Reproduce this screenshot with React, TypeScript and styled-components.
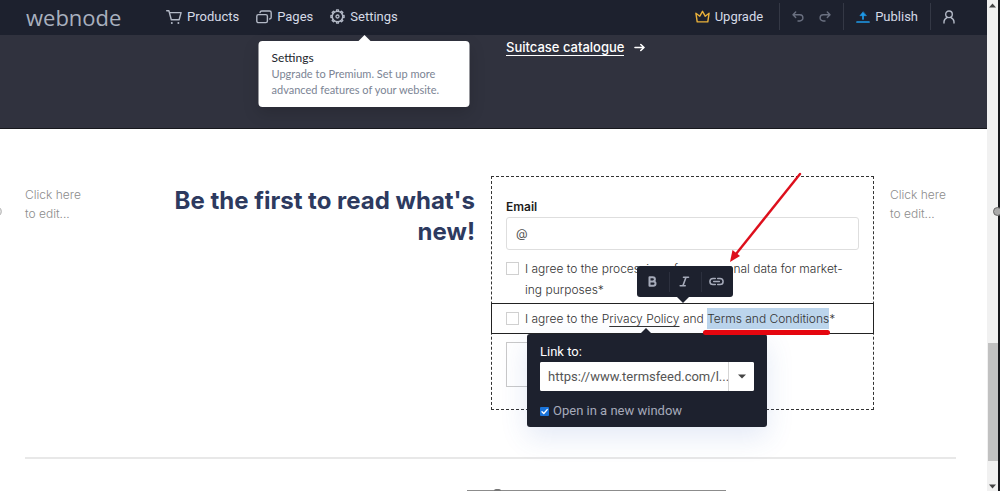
import React from "react";
import styled, { createGlobalStyle } from "styled-components";

const ui = '"Roboto", "Liberation Sans", sans-serif';
const copy = '"Inter", "Liberation Sans", sans-serif';
const navy = "#1d212e";

const GlobalStyle = createGlobalStyle`
  *, *::before, *::after { box-sizing: border-box; }
  html, body { margin: 0; padding: 0; }
  body { background: #fff; font-family: ${copy}; overflow: hidden; }
  button, input { font: inherit; }
  p, h2 { margin: 0; }
`;

const Shell = styled.div`
  display: flex;
  height: 100vh;
  overflow: hidden;
`;

const Page = styled.div`
  flex: 1;
  min-width: 0;
  display: flex;
  flex-direction: column;
  position: relative;
`;

const Header = styled.header`
  display: flex;
  align-items: center;
  height: 35px;
  flex: none;
  padding: 0 20px 2px 26px;
  background: ${navy};
  color: #d5dae6;
  font-family: ${ui};
  font-size: 13px;
`;

const Logo = styled.a`
  width: 140px;
  color: #a9b0be;
  font: 400 22px/28px "Open Sans", sans-serif;
  text-decoration: none;
`;

const Nav = styled.nav`
  display: flex;
  flex: 1;
  gap: 17px;
`;

const NavItem = styled.div`
  position: relative;
`;

const BarButton = styled.button`
  display: flex;
  align-items: center;
  gap: 5px;
  height: 32px;
  padding: 0;
  border: 0;
  background: none;
  color: inherit;
  cursor: pointer;
`;

const Actions = styled.div`
  display: flex;
  align-items: center;
`;

const ActionGroup = styled.div<{ $first?: boolean }>`
  display: flex;
  align-items: center;
  gap: 15px;
  height: 27px;
  padding: 0 ${(p) => (p.$first ? "16px" : "12px")} 0 12px;
  border-left: ${(p) => (p.$first ? "0" : "1px solid #343845")};
`;

const Tip = styled.div`
  position: absolute;
  z-index: 5;
  top: 40px;
  left: 50%;
  width: 211px;
  transform: translateX(-50%);
  padding: 9px 13px;
  border-radius: 4px;
  background: #fff;
  box-shadow: 0 6px 16px rgba(0, 0, 0, 0.15);
  color: #7b8494;
  font: 400 11px/16px "Lato", sans-serif;
  white-space: nowrap;
  &::before {
    content: "";
    position: absolute;
    left: 50%;
    top: -6px;
    margin-left: -7px;
    border: 7px solid transparent;
    border-top: 0;
    border-bottom-color: #fff;
  }
`;

const TipTitle = styled.p`
  color: #22252d;
  font: 400 12px/16px "Lato", sans-serif;
`;

const Columns = styled.div`
  display: grid;
  grid-template-columns: 66px 368fr 383fr 66px;
  gap: 16px;
  padding: 0 31px 0 25px;
`;

const Hero = styled.section`
  flex: none;
  height: 94px;
  background: #30323e;
  border-bottom: 1px solid #17181d;
`;

const HeroLink = styled.a`
  grid-column: 3;
  display: flex;
  align-items: center;
  gap: 10px;
  height: 25px;
  padding-left: 15px;
  color: #fff;
  font-size: 13px;
  font-weight: 500;
  text-decoration: none;
  span { border-bottom: 1px solid #fff; line-height: 15px; }
`;

const Newsletter = styled.section`
  padding-top: 47px;
`;

const SideNote = styled.p`
  padding-top: 9px;
  color: #8c8c8c;
  font: 300 12px/19px ${copy};
`;

const Title = styled.h2`
  padding-top: 9px;
  color: #2d3a5f;
  font: 700 24px/31px ${copy};
  text-align: right;
`;

const Form = styled.form`
  height: 234px;
  padding: 19px 0 0;
  border: 1px dashed #333;
`;

const Field = styled.div`
  display: flex;
  flex-direction: column;
  padding: 0 14px;
  label {
    color: #1c1c1c;
    font: 600 12px/21px ${copy};
  }
`;

const EmailInput = styled.input`
  width: 100%;
  height: 33px;
  padding: 0 9px;
  border: 1px solid #dedede;
  border-radius: 3px;
  font-size: 12px;
  &::placeholder { color: #555; opacity: 1; }
`;

const Consent = styled.div<{ $active?: boolean }>`
  position: relative;
  display: flex;
  gap: 6px;
  margin: ${(p) => (p.$active ? "3px -1px 0" : "8px 0 0")};
  padding: ${(p) => (p.$active ? "4px 14px" : "0 14px")};
  border: ${(p) => (p.$active ? "1px solid #222" : "0")};
  color: #333;
  font: 300 12px/21px ${copy};
  white-space: nowrap;
`;

const Tick = styled.input`
  appearance: none;
  flex: none;
  width: 13px;
  height: 13px;
  margin: 4px 0 0;
  border: 1px solid #d0d0d0;
  background: #fff;
`;

const PolicyLink = styled.a`
  color: inherit;
  text-decoration: underline;
  text-underline-offset: 3px;
`;

const Selected = styled.span`
  position: relative;
  display: inline-block;
  background: #bcd5ec;
  &::after {
    content: "";
    position: absolute;
    z-index: 4;
    left: -4px;
    right: -1px;
    bottom: -6px;
    height: 5px;
    border-radius: 3px;
    background: #e5060f;
  }
`;

const Submit = styled.button`
  width: 100px;
  height: 45px;
  margin: 8px 14px 0;
  border: 1px solid #c9c9c9;
  background: #fff;
`;

const FormatBar = styled.div`
  position: absolute;
  z-index: 3;
  left: 145px;
  bottom: 36px;
  display: flex;
  align-items: center;
  height: 31px;
  border-radius: 3px;
  background: ${navy};
  &::after {
    content: "";
    position: absolute;
    left: 50%;
    top: 100%;
    margin-left: -8px;
    border: 6px solid transparent;
    border-bottom: 0;
    border-top-color: ${navy};
  }
`;

const FormatButton = styled.button`
  display: grid;
  place-items: center;
  width: 32px;
  height: 20px;
  padding: 0 2px 0 0;
  border: 0;
  background: none;
  color: #a6abba;
  & + & { border-left: 1px solid #2c303e; }
`;

const LinkPanel = styled.div`
  position: absolute;
  z-index: 3;
  left: 35px;
  top: 30px;
  width: 240px;
  height: 93px;
  padding: 8px 13px;
  border-radius: 3px;
  background: ${navy};
  box-shadow: 0 10px 28px rgba(60, 100, 190, 0.14);
  color: #fff;
  font: 400 13px/20px ${ui};
  &::before {
    content: "";
    position: absolute;
    left: 50%;
    top: -6px;
    margin-left: -7px;
    border: 6px solid transparent;
    border-top: 0;
    border-bottom-color: ${navy};
  }
`;

const PanelLabel = styled.label`
  display: block;
`;

const Combo = styled.div`
  display: flex;
  height: 29px;
  border-radius: 2px;
  background: #fff;
  overflow: hidden;
  input {
    flex: 1;
    min-width: 0;
    padding: 0 0 0 8px;
    border: 0;
    color: #555;
    font-size: 13px;
  }
  button {
    display: grid;
    place-items: center;
    width: 26px;
    padding: 0;
    border: 0;
    border-left: 1px solid #d5d5d5;
    background: #fff;
  }
`;

const NewWindow = styled.label`
  display: flex;
  align-items: center;
  gap: 4px;
  margin-top: 10px;
  color: #a6aaba;
  input {
    appearance: none;
    width: 9px;
    height: 9px;
    margin: 0;
    border-radius: 1px;
    background: #1a73d9;
  }
`;

const TickBox = styled.span`
  position: relative;
  display: flex;
  svg { position: absolute; inset: 0; }
`;

const Rule = styled.hr`
  margin: 47px 31px 0 25px;
  border: 0;
  border-top: 2px solid #e8e8e8;
`;

const BlockEdge = styled.div`
  position: absolute;
  left: 467px;
  bottom: 0;
  width: 259px;
  height: 1px;
  background: #8c8c8c;
  &::before {
    content: "";
    position: absolute;
    left: 27px;
    top: -1px;
    width: 7px;
    height: 2px;
    border-radius: 2px 2px 0 0;
    background: #777;
  }
`;

const Handle = styled.i<{ $right?: boolean }>`
  position: absolute;
  z-index: 6;
  top: 207px;
  ${(p) => (p.$right ? "right: -15px" : "left: -7px")};
  width: 9px;
  height: 9px;
  border: 1px solid ${(p) => (p.$right ? "#666" : "#bbb")};
  border-radius: 50%;
  background: ${(p) => (p.$right ? "#aaa" : "#ddd")};
`;

const Pointer = styled.svg`
  position: absolute;
  z-index: 7;
  top: -134px;
  left: 234px;
  pointer-events: none;
`;

const ScrollBar = styled.div`
  display: flex;
  flex-direction: column;
  align-items: center;
  width: 13px;
  flex: none;
  padding: 3px 0 2px;
  border-right: 2px solid #16171b;
  background: #f1f1f1;
`;

const Track = styled.div`
  flex: 1;
  align-self: stretch;
  display: flex;
  flex-direction: column;
  padding: 0 0 0 1px;
`;

const Space = styled.div<{ $grow: number }>`
  flex: ${(p) => p.$grow};
`;

const Thumb = styled.div`
  flex: 118;
  background: #c1c1c1;
`;

const Icon = ({ w, h = w, box, children, width = 1.4, color = "currentColor" }: {
  w: number; h?: number; box?: string; children: React.ReactNode; width?: number; color?: string;
}) => (
  <svg width={w} height={h} viewBox={box ?? `0 0 ${w} ${h}`} fill="none" stroke={color}
    strokeWidth={width} strokeLinecap="round" strokeLinejoin="round" aria-hidden="true">
    {children}
  </svg>
);

const Cart = () => (
  <Icon w={16} color="#b3b9c6">
    <path d="M.7 1.7h2.200l2.400 9.100h7.800l2-7.200H3.500" />
    <circle cx="5.800" cy="13.900" r="1" fill="#b3b9c6" stroke="none" />
    <circle cx="12.400" cy="13.900" r="1" fill="#b3b9c6" stroke="none" />
  </Icon>
);

const PagesIcon = () => (
  <Icon w={16} color="#b3b9c6">
    <rect x=".8" y="5.600" width="10.600" height="8" rx="1.600" />
    <path d="M4 3.600Q4.200 2 5.800 2h7.700Q15.200 2 15.200 3.700v4.600Q15.200 10 13.600 10" />
  </Icon>
);

const Gear = () => (
  <Icon w={15} width={1.3} color="#b3b9c6">
    <circle cx="7.500" cy="7.500" r="5.200" />
    <circle cx="7.500" cy="7.500" r="1.500" />
    {[0, 45, 90, 135, 180, 225, 270, 315].map((a) => (
      <path key={a} d="M6.500 2.200V.9h2v1.300" transform={`rotate(${a} 7.500 7.500)`} />
    ))}
  </Icon>
);

const Crown = () => (
  <Icon w={15} h={13} color="#eab13a">
    <path d="M2.200 11.900h10.600l1.300-8.700-3.900 3L7.500 1.300 4.800 6.200.9 3.200z" />
  </Icon>
);

const Undo = () => (
  <Icon w={12} h={11} color="#6a7080">
    <path d="M3.700 1L1 3.800l2.700 2.800M1.200 3.800h6.600a3.100 3.100 0 0 1 0 6.200H6" />
  </Icon>
);

const Redo = () => (
  <Icon w={12} h={11} color="#6a7080">
    <path d="M8.300 1L11 3.800 8.300 6.600M10.800 3.800H4.200a3.100 3.100 0 0 0 0 6.200H6" />
  </Icon>
);

const Upload = () => (
  <Icon w={14} h={12} color="#1e9bea">
    <path d="M1 11h12M7 8V3.500" strokeWidth="1.700" />
    <path d="M7 1L3.900 4.700h6.200z" fill="#1e9bea" strokeWidth=".6" />
  </Icon>
);

const Person = () => (
  <Icon w={12} h={14} color="#b3b9c6">
    <circle cx="6" cy="4.300" r="3.300" />
    <path d="M1 13v-1.200Q1 9 4.400 7.400M11 13v-1.200Q11 9 7.600 7.400" />
  </Icon>
);

const Chain = () => (
  <Icon w={15} h={9} width={1.500}>
    <path d="M6.300 7.600H4a3.100 3.100 0 0 1 0-6.200h2.300M8.700 1.400H11a3.100 3.100 0 0 1 0 6.200H8.700M4.700 4.500h5.600" />
  </Icon>
);

const Caret = ({ size = 7 }: { size?: number }) => (
  <svg width={size} height="5" viewBox="0 0 7 5" preserveAspectRatio="none" aria-hidden="true">
    <path d="M0 .5h7L3.500 4.500z" fill="#444" />
  </svg>
);

const CaretUp = () => (
  <svg width="7" height="5" viewBox="0 0 7 5" aria-hidden="true">
    <path d="M0 4.500h7L3.500.5z" fill="#444" />
  </svg>
);

export default function App() {
  return (
    <Shell>
      <GlobalStyle />
      <Page>
        <Header>
          <Logo href="#">webnode</Logo>
          <Nav>
            <NavItem><BarButton><Cart />Products</BarButton></NavItem>
            <NavItem><BarButton><PagesIcon />Pages</BarButton></NavItem>
            <NavItem>
              <BarButton aria-describedby="settings-tip"><Gear />Settings</BarButton>
              <Tip id="settings-tip" role="tooltip">
                <TipTitle>Settings</TipTitle>
                Upgrade to Premium. Set up more<br />advanced features of your website.
              </Tip>
            </NavItem>
          </Nav>
          <Actions>
            <ActionGroup $first><BarButton><Crown />Upgrade</BarButton></ActionGroup>
            <ActionGroup>
              <BarButton aria-label="Undo"><Undo /></BarButton>
              <BarButton aria-label="Redo"><Redo /></BarButton>
            </ActionGroup>
            <ActionGroup><BarButton><Upload />Publish</BarButton></ActionGroup>
            <ActionGroup><BarButton aria-label="Account"><Person /></BarButton></ActionGroup>
          </Actions>
        </Header>
        <Hero>
          <Columns>
            <HeroLink href="#">
              <span>Suitcase catalogue</span>
              <Icon w={11} h={9} width={1.600}><path d="M1 4.500h9M6.800 1.500l3.200 3-3.200 3" /></Icon>
            </HeroLink>
          </Columns>
        </Hero>
        <Newsletter>
          <Columns>
            <SideNote>Click here<br />to edit...</SideNote>
            <Title>Be the first to read what's<br />new!</Title>
            <Form onSubmit={(e) => e.preventDefault()}>
              <Field>
                <label htmlFor="email">Email</label>
                <EmailInput id="email" type="email" placeholder="@" />
              </Field>
              <Consent>
                <Tick type="checkbox" id="marketing" />
                <label htmlFor="marketing">
                  I agree to the processing of my personal data for market-<br />ing purposes*
                </label>
              </Consent>
              <Consent $active>
                <Tick type="checkbox" id="terms" />
                <label htmlFor="terms">
                  I agree to the P<PolicyLink href="#">rivacy Policy</PolicyLink> and{" "}
                  <Selected>Terms and Conditions</Selected>*
                </label>
                <FormatBar role="toolbar" aria-label="Text format">
                  <FormatButton type="button" aria-label="Bold">
                    <Icon w={9} h={11} width={2}><path d="M1.500 1.200h3.300a2.100 2.100 0 0 1 0 4.200H1.500zM1.500 5.400h3.800a2.200 2.200 0 0 1 0 4.400H1.500z" /></Icon>
                  </FormatButton>
                  <FormatButton type="button" aria-label="Italic">
                    <Icon w={11} h={11} width={1.600}><path d="M4.500 1.200h5M1.200 9.800h5M7 1.200L3.900 9.800" /></Icon>
                  </FormatButton>
                  <FormatButton type="button" aria-label="Link"><Chain /></FormatButton>
                </FormatBar>
                <LinkPanel>
                  <PanelLabel htmlFor="url">Link to:</PanelLabel>
                  <Combo>
                    <input id="url" type="text" defaultValue="https://www.termsfeed.com/l..." />
                    <button type="button" aria-label="Show pages"><Caret size={8} /></button>
                  </Combo>
                  <NewWindow>
                    <TickBox>
                      <input type="checkbox" defaultChecked />
                      <Icon w={9} color="#fff"><path d="M2 4.700l1.800 1.800L7.200 2.600" /></Icon>
                    </TickBox>
                    Open in a new window
                  </NewWindow>
                </LinkPanel>
                <Pointer width="80" height="100" viewBox="0 0 80 100" aria-hidden="true">
                  <path d="M74 4L10 84" stroke="#dd0f1c" strokeWidth="2.400" strokeLinecap="round" />
                  <path d="M4 92L6.500 80 14 86z" fill="#dd0f1c" />
                </Pointer>
              </Consent>
              <Submit type="submit" aria-label="Submit" />
            </Form>
            <SideNote>Click here<br />to edit...</SideNote>
          </Columns>
          <Rule />
        </Newsletter>
        <BlockEdge />
        <Handle />
        <Handle $right />
      </Page>
      <ScrollBar>
        <CaretUp />
        <Track>
          <Space $grow={334} />
          <Thumb />
          <Space $grow={23} />
        </Track>
        <Caret />
      </ScrollBar>
    </Shell>
  );
}
